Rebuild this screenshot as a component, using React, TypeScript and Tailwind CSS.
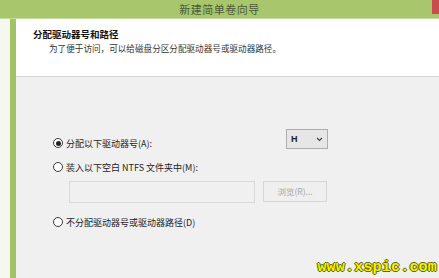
import React from 'react';

const Radio = ({ checked }: { checked?: boolean }) => (
  <span className="w-[10px] h-[10px] rounded-full border border-[#3a3a3a] bg-white flex items-center justify-center shrink-0">
    {checked && <span className="w-[5px] h-[5px] rounded-full bg-[#222]" />}
  </span>
);

export default function App() {
  return (
    <div className="relative w-[439px] h-[278px] overflow-hidden flex flex-col bg-[#f0f0f0] text-[#1e1e1e] font-['Noto_Sans_CJK_SC','Noto_Sans',sans-serif]">
      {/* title bar */}
      <div className="relative h-[19px] shrink-0 bg-[#a8c76c] border-b border-[#c6dc9c] flex items-center justify-center">
        <span className="text-[11px] leading-none text-[#4c5a38] tracking-[0.5px]">新建简单卷向导</span>
        <div className="absolute right-0 top-0 w-[7px] h-[14px] bg-[#c94b4b]" />
      </div>

      <div className="flex flex-1">
        <div className="w-[10px] bg-[#f6f7f1]" />
        <div className="w-[6px] bg-[#a2c464]" />

        <div className="flex-1 flex flex-col">
          {/* header */}
          <div className="h-[58px] bg-white border-b border-[#d4d4d4] pl-[17px] pt-[9px]">
            <div className="text-[9.5px] leading-[13px] font-bold text-[#111]">分配驱动器号和路径</div>
            <div className="text-[8.6px] leading-[13px] pl-[16px] mt-[1px] text-[#333]">为了便于访问，可以给磁盘分区分配驱动器号或驱动器路径。</div>
          </div>

          {/* body */}
          <div className="flex-1 pl-[37px] pt-[52px] text-[9px] leading-none">
            <div className="flex items-start h-[20px]">
              <div className="w-[233px] flex items-center gap-[3px] pt-[9px]">
                <Radio checked />
                <span>分配以下驱动器号(A):</span>
              </div>
              <div className="w-[42px] h-[20px] border border-[#adadad] bg-[#e6e6e6] flex items-center justify-between px-[4px]">
                <span className="font-bold text-[9px] font-['Liberation_Sans',sans-serif]">H</span>
                <svg width="7" height="5" viewBox="0 0 7 5">
                  <path d="M1 1 L3.5 3.5 L6 1" fill="none" stroke="#444" strokeWidth="1.2" />
                </svg>
              </div>
            </div>

            <div className="flex items-center gap-[3px] h-[12px] mt-[12px]">
              <Radio />
              <span>装入以下空白 NTFS 文件夹中(M):</span>
            </div>

            <div className="flex items-start gap-[8px] mt-[8px] ml-[16px]">
              <div className="w-[186px] h-[22px] border border-[#d9d9d9] bg-[#f0f0f0]" />
              <div className="w-[64px] h-[21px] border border-[#d6d6d6] bg-[#efefef] flex items-center justify-center text-[8.5px] text-[#a6a6a6]">
                浏览(R)...
              </div>
            </div>

            <div className="flex items-center gap-[3px] h-[12px] mt-[13px]">
              <Radio />
              <span>不分配驱动器号或驱动器路径(D)</span>
            </div>
          </div>
        </div>
      </div>

      {/* watermark */}
      <div className="absolute right-[2px] bottom-[3px] text-[15px] leading-none font-bold font-['Liberation_Mono',monospace] text-[#f4f400] tracking-[0.2px] [text-shadow:1px_0_0_#5f6100,-1px_0_0_#5f6100,0_1px_0_#5f6100,0_-1px_0_#5f6100]">
        www.xspic.com
      </div>
    </div>
  );
}
